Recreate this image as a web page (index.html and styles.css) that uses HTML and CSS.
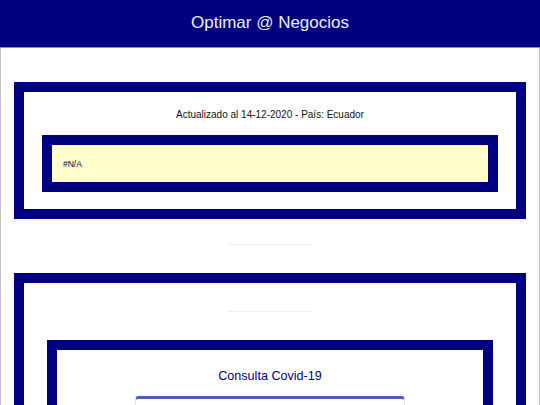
FILE: index.html
```html
<!DOCTYPE html>
<html lang="es">

<head>
    <meta charset="UTF-8">
    <meta name="viewport" content="width=device-width, initial-scale=1.0">
    <title>Optimar @ Negocios</title>
    <link rel="stylesheet" href="styles.css">
</head>

<body>
    <div class="header">Optimar @ Negocios</div>

    <div class="page">
        <!-- Resumen por pais -->
        <div class="box">
            <p class="updated">Actualizado al 14-12-2020 - País: Ecuador</p>
            <div class="inner-box">
                <div class="value">#N/A</div>
            </div>
        </div>

        <hr class="sep first">

        <!-- Consulta -->
        <div class="box">
            <hr class="sep">
            <div class="inner-box query">
                <h3 class="query-title">Consulta Covid-19</h3>
                <div class="card"></div>
            </div>
        </div>
    </div>
</body>

</html>
```

FILE: styles.css
```css
body {
    margin: 0;
    background: white;
    font-family: "Liberation Sans", Arial, sans-serif;
}

.header {
    height: 47px;
    line-height: 46px;
    background: #000080;
    border-bottom: 1px solid #8c8cd9;
    color: #eeeeff;
    font-size: 17px;
    text-align: center;
}

.page {
    border-left: 1px solid #c4c4c4;
    border-right: 1px solid #c4c4c4;
    min-height: 400px;
    padding: 34px 13px 0;
}

.box {
    border: 10px solid #000080;
    padding: 16px 0 17px;
}

.updated {
    margin: 0 0 13px;
    font-size: 10px;
    line-height: 14px;
    text-align: center;
    color: #111;
}

.inner-box {
    margin: 0 18px;
    border: 10px solid #000080;
}

.value {
    height: 37px;
    padding: 0 11px;
    display: flex;
    align-items: center;
    background: #ffffcc;
    color: #000050;
    font-size: 8.5px;
}

.sep {
    width: 84px;
    margin: 28px auto;
    border: none;
    border-top: 1px solid #efefef;
}

.sep.first {
    margin-top: 25px;
}

.box .sep {
    margin-top: 12px;
}

.query {
    margin: 0 23px;
    padding-top: 19px;
}

.query-title {
    margin: 0 0 12px;
    font-size: 12.6px;
    font-weight: normal;
    line-height: 15px;
    text-align: center;
    color: #000080;
}

.card {
    width: 268px;
    height: 40px;
    margin: 0 auto;
    border: 1px solid #e2e2e2;
    border-top: 3px solid #4e5dbd;
    border-radius: 4px 4px 0 0;
}
```
